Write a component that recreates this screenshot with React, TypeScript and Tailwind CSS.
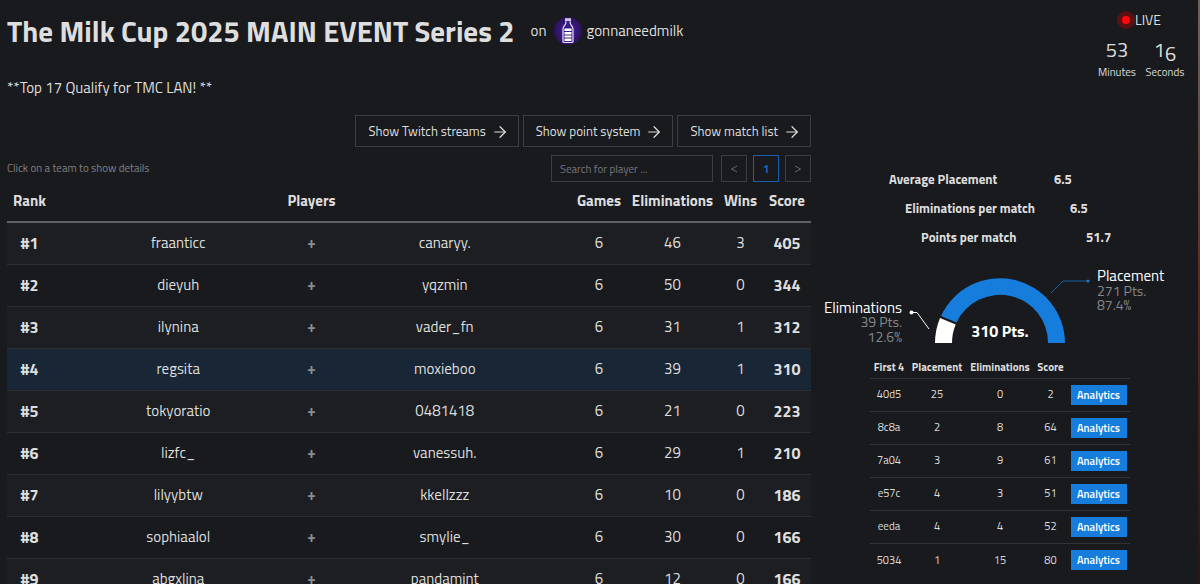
import { ArrowRight } from 'lucide-react'
import { clsx } from 'clsx'

const teams = [
  { rank: 1, players: ['fraanticc', 'canaryy.'], games: 6, elims: 46, wins: 3, score: 405 },
  { rank: 2, players: ['dieyuh', 'yqzmin'], games: 6, elims: 50, wins: 0, score: 344 },
  { rank: 3, players: ['ilynina', 'vader_fn'], games: 6, elims: 31, wins: 1, score: 312 },
  { rank: 4, players: ['regsita', 'moxieboo'], games: 6, elims: 39, wins: 1, score: 310 },
  { rank: 5, players: ['tokyoratio', '0481418'], games: 6, elims: 21, wins: 0, score: 223 },
  { rank: 6, players: ['lizfc_', 'vanessuh.'], games: 6, elims: 29, wins: 1, score: 210 },
  { rank: 7, players: ['lilyybtw', 'kkellzzz'], games: 6, elims: 10, wins: 0, score: 186 },
  { rank: 8, players: ['sophiaalol', 'smylie_'], games: 6, elims: 30, wins: 0, score: 166 },
  { rank: 9, players: ['abgxlina', 'pandamint'], games: 6, elims: 12, wins: 0, score: 166 },
]

const matches = [
  { id: '40d5', placement: 25, elims: 0, score: 2 },
  { id: '8c8a', placement: 2, elims: 8, score: 64 },
  { id: '7a04', placement: 3, elims: 9, score: 61 },
  { id: 'e57c', placement: 4, elims: 3, score: 51 },
  { id: 'eeda', placement: 4, elims: 4, score: 52 },
  { id: '5034', placement: 1, elims: 15, score: 80 },
]

const selectedRank = 4

function MilkAvatar() {
  return (
    <svg className="h-7 w-7" viewBox="0 0 28 28" aria-hidden="true">
      <defs>
        <radialGradient id="avatar" cx="50%" cy="50%" r="50%">
          <stop offset="0" stopColor="#4a23a0" />
          <stop offset="0.6" stopColor="#35187c" />
          <stop offset="1" stopColor="#2d1258" />
        </radialGradient>
      </defs>
      <circle cx="14" cy="14" r="14" fill="url(#avatar)" />
      <path
        d="M11.8 4.2V6C11.8 8 9 9.200 9 12V24.500Q9 25.500 10 25.500H18Q19 25.500 19 24.500V12C19 9.200 16.200 8 16.200 6V4.200"
        fill="#3a1c86"
        stroke="#e9e4f5"
        strokeWidth="1.2"
      />
      <path d="M11 1.200h6v2.800h-6z" fill="#cfc6e6" />
      <path d="M10.500 11.500h7v2.500h-7zM10.500 15h7v2.500h-7zM10.500 18.500h7v2h-7zM10.500 21.500h7v2.500h-7z" fill="#fff" />
    </svg>
  )
}

function Header() {
  return (
    <header className="flex items-start justify-between">
      <div>
        <div className="flex items-center gap-4 pt-2">
          <h1 className="text-[29px] leading-[46px] font-bold">The Milk Cup 2025 MAIN EVENT Series 2</h1>
          <div className="flex items-center gap-2 text-[15px]">
            <span>on</span>
            <a href="#organizer" className="flex items-center gap-1">
              <MilkAvatar />
              gonnaneedmilk
            </a>
          </div>
        </div>
        <p className="mt-6 text-[15px] leading-5">**Top 17 Qualify for TMC LAN! **</p>
      </div>
      <div className="flex w-24 flex-col items-center pt-2">
        <div className="flex items-center pr-1 text-sm leading-6">
          <span className="flex h-[18px] w-[18px] items-center justify-center rounded-full bg-[#5a1114]">
            <span className="h-2 w-2 rounded-full bg-[#ff0a0a]" />
          </span>
          LIVE
        </div>
        <div className="mt-1 grid w-full grid-cols-2 text-center">
          <div>
            <div className="text-xl leading-7">53</div>
            <div className="text-[11px] leading-4">Minutes</div>
          </div>
          <div>
            <div className="flex justify-center text-xl leading-7">
              <span>1</span>
              <span className="-mb-1 pt-1">6</span>
            </div>
            <div className="text-[11px] leading-4">Seconds</div>
          </div>
        </div>
      </div>
    </header>
  )
}

function PanelButton({ label }: { label: string }) {
  return (
    <button type="button" className="flex h-8 items-center gap-[5px] border border-[#3c3e42] pt-px pr-[9px] pl-3 text-[13px]">
      {label}
      <ArrowRight size={18} strokeWidth={1.6} />
    </button>
  )
}

function PageArrow({ label, path }: { label: string; path: string }) {
  return (
    <button
      type="button"
      aria-label={label}
      className="flex h-[27px] w-[26px] items-center justify-center border border-[#3c3e42] text-[#66686c]"
    >
      <svg className="h-2 w-2" viewBox="0 0 8 8" fill="none" stroke="currentColor" aria-hidden="true">
        <path d={path} />
      </svg>
    </button>
  )
}

function Toolbar() {
  return (
    <>
      <div className="flex justify-end gap-1">
        <PanelButton label="Show Twitch streams" />
        <PanelButton label="Show point system" />
        <PanelButton label="Show match list" />
      </div>
      <div className="mt-2 flex items-center justify-between">
        <span className="text-[11px] text-[#808285]">Click on a team to show details</span>
        <div className="flex gap-[6px]">
          <input
            type="text"
            aria-label="Search for player"
            placeholder="Search for player ..."
            className="mr-[2px] h-[27px] w-[162px] border border-[#3c3e42] bg-transparent px-2 text-[11px] placeholder:text-[#75777b]"
          />
          <PageArrow label="Previous page" path="M7 1L1.500 4L7 7" />
          <button type="button" className="h-[27px] w-[26px] border border-[#1a5fae] text-xs font-semibold text-[#1d6fc9]">
            1
          </button>
          <PageArrow label="Next page" path="M1 1L6.500 4L1 7" />
        </div>
      </div>
    </>
  )
}

function Leaderboard() {
  return (
    <table className="w-full table-fixed border-collapse text-center text-[15px] leading-5">
      <thead>
        <tr className="h-10 border-b-2 border-[#5f6164]">
          <th className="w-[45px] pb-[2px]">Rank</th>
          <th className="pb-[2px]">Players</th>
          <th className="w-[56px] pb-[2px]">Games</th>
          <th className="w-[91px] pb-[2px]">Eliminations</th>
          <th className="w-[45px] pb-[2px]">Wins</th>
          <th className="w-[48px] pb-[2px]">Score</th>
        </tr>
      </thead>
      <tbody>
        {teams.map((team) => (
          <tr
            key={team.rank}
            className={clsx(
              'h-[42px] cursor-pointer border-b border-[#2b2e32]',
              team.rank === selectedRank ? 'bg-[#182635]' : 'odd:bg-[#1d1e21]',
            )}
          >
            <td className="text-base font-bold">#{team.rank}</td>
            <td>
              <div className="grid grid-cols-[1fr_28px_1fr] items-center px-[7px]">
                <span>{team.players[0]}</span>
                <span className="font-bold text-[#8b8d90]">+</span>
                <span>{team.players[1]}</span>
              </div>
            </td>
            <td>{team.games}</td>
            <td>{team.elims}</td>
            <td>{team.wins}</td>
            <td className="text-base font-bold">{team.score}</td>
          </tr>
        ))}
      </tbody>
    </table>
  )
}

function Averages() {
  return (
    <dl className="w-[222px] text-[13px] leading-[29px] font-bold">
      <div className="flex">
        <dt className="w-[165px]">Average Placement</dt>
        <dd>6.5</dd>
      </div>
      <div className="flex pl-4">
        <dt className="w-[165px] shrink-0">Eliminations per match</dt>
        <dd>6.5</dd>
      </div>
      <div className="flex pl-8">
        <dt className="w-[165px] shrink-0">Points per match</dt>
        <dd>51.7</dd>
      </div>
    </dl>
  )
}

function ScoreChart() {
  return (
    <svg className="mt-[11px] h-[90px] w-[360px] text-[15px]" viewBox="820 263 360 90" role="img" aria-label="Score breakdown">
      <path d="M935 343A65 65 0 0 1 940 318L955.700 324.500A48 48 0 0 0 952 343Z" fill="#fff" />
      <path d="M941 316A65 65 0 0 1 1065 343L1048 343A48 48 0 0 0 956.500 322.500Z" fill="#177ddc" />
      <path d="M1051 293L1063 281H1088" fill="none" stroke="#1b5f9f" />
      <circle cx="1088" cy="281" r="1.500" fill="#177ddc" />
      <path d="M911 312.500H917L929 329" fill="none" stroke="#fff" />
      <circle cx="911.500" cy="312.500" r="2" fill="#fff" />
      <text x="1000" y="337" textAnchor="middle" fill="#fff" className="text-base font-bold">310 Pts.</text>
      <text x="1097" y="281" fill="#fff">Placement</text>
      <text x="1097" y="296" fill="#85878a" className="text-sm">271 Pts.</text>
      <text x="1097" y="310" fill="#85878a" className="text-sm">87.4%</text>
      <text x="902" y="313" textAnchor="end" fill="#fff">Eliminations</text>
      <text x="902" y="327" textAnchor="end" fill="#85878a" className="text-sm">39 Pts.</text>
      <text x="902" y="342" textAnchor="end" fill="#85878a" className="text-sm">12.6%</text>
    </svg>
  )
}

function MatchTable() {
  return (
    <table className="w-[260px] table-fixed border-collapse text-center text-[11px]">
      <thead>
        <tr className="h-[25px] border-b border-[#303236]">
          <th className="w-[38px] pt-1 whitespace-nowrap">First 4</th>
          <th className="w-[58px] pt-1">Placement</th>
          <th className="w-[68px] pt-1">Eliminations</th>
          <th className="w-[33px] pt-1">Score</th>
          <td className="w-[63px]" />
        </tr>
      </thead>
      <tbody>
        {matches.map((match) => (
          <tr key={match.id} className="h-[33px] border-b border-[#303236] last:border-0">
            <td>{match.id}</td>
            <td>{match.placement}</td>
            <td>{match.elims}</td>
            <td>{match.score}</td>
            <td>
              <button type="button" className="h-5 w-14 bg-[#177ddc] align-middle text-[11px] leading-5 font-semibold text-white">
                Analytics
              </button>
            </td>
          </tr>
        ))}
      </tbody>
    </table>
  )
}

export default function App() {
  return (
    <div className="flex h-screen overflow-hidden bg-[#191a1d] font-['Titillium_Web','Noto_Sans',sans-serif] text-[#dededf]">
      <div className="min-w-0 flex-1 pr-[9px] pl-[7px]">
        <Header />
        <div className="mt-[17px] grid grid-cols-[804fr_378fr]">
          <main>
            <Toolbar />
            <Leaderboard />
          </main>
          <aside className="flex flex-col items-center pt-[50px]">
            <Averages />
            <ScoreChart />
            <MatchTable />
          </aside>
        </div>
      </div>
      <div className="w-[2px] bg-linear-to-b from-[#6b6460] via-[#5b2b1c] to-[#2a1612]" />
    </div>
  )
}
